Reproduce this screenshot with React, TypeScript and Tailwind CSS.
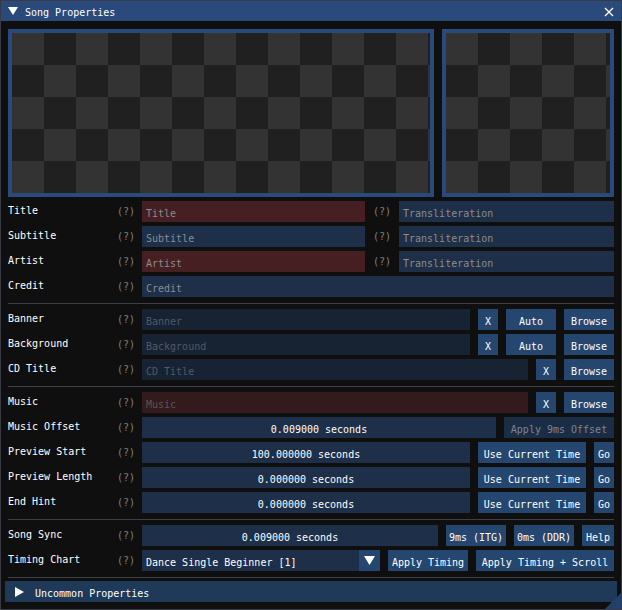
import React from "react";

const BTN = "#25466f";
const FIELD = "#1d2f49";
const RED = "#451f21";

function Field({
  text,
  bg = FIELD,
  color = "text-white",
  center = false,
  w,
}: {
  text: string;
  bg?: string;
  color?: string;
  center?: boolean;
  w?: string;
}) {
  return (
    <div
      className={`h-[21px] px-[4px] pt-[6px] flex items-start whitespace-nowrap overflow-hidden ${color} ${center ? "justify-center" : ""} ${w ?? "flex-1"}`}
      style={{ backgroundColor: bg }}
    >
      {text}
    </div>
  );
}

function Btn({ text, w, dim = false }: { text: string; w: string; dim?: boolean }) {
  return (
    <div
      className={`h-[21px] pt-[6px] flex items-start justify-center whitespace-nowrap ${w} ${dim ? "bg-[#1b2d45] text-[#7b8594]" : "text-white"}`}
      style={dim ? undefined : { backgroundColor: BTN }}
    >
      {text}
    </div>
  );
}

function Row({ label, children }: { label: string; children: React.ReactNode }) {
  return (
    <div className="flex h-[21px]">
      <div className="w-[109px] pt-[3px] text-white whitespace-nowrap">{label}</div>
      <div className="w-[25px] pt-[4px] text-[#808080]">(?)</div>
      <div className="flex-1 flex gap-[8px]">{children}</div>
    </div>
  );
}

function Sep() {
  return <div className="h-px bg-[#3e3e47] mt-[2px] mb-[1px]" />;
}

function Checker({ w }: { w: string }) {
  return (
    <div className={`${w} h-[168px] border-[4px] border-[#294a7a]`}>
      <div className="w-full h-full bg-[repeating-conic-gradient(#202020_0_25%,#333333_0_50%)] bg-[length:64px_64px]" />
    </div>
  );
}

export default function App() {
  return (
    <div className="relative w-[622px] h-[610px] bg-[#0f0f0f] border border-[#3a3a44] font-['DejaVu_Sans_Mono',monospace] text-[10px] leading-[13px] overflow-hidden">
      {/* title bar */}
      <div className="h-[20px] bg-[#294a7a] flex items-center text-white">
        <svg width="10" height="9" viewBox="0 0 10 9" className="ml-[7px] mt-[1px]">
          <polygon points="0,0 10,0 5,8" fill="#fff" />
        </svg>
        <span className="ml-[7px] mt-[2px]">Song Properties</span>
        <svg width="10" height="10" viewBox="0 0 10 10" className="ml-auto mr-[7px] mt-[1px]">
          <path d="M1 1 L9 9 M9 1 L1 9" stroke="#fff" strokeWidth="1.3" />
        </svg>
      </div>

      <div className="px-[7px] pt-[8px] flex flex-col gap-[4px]">
        <div className="flex gap-[8px]">
          <Checker w="w-[426px]" />
          <Checker w="flex-1" />
        </div>

        <Row label="Title">
          <Field text="Title" bg={RED} color="text-[#8c8c8c]" w="w-[223px]" />
          <div className="w-[18px] pt-[4px] text-[#808080]">(?)</div>
          <Field text="Transliteration" color="text-[#8c8c8c]" />
        </Row>
        <Row label="Subtitle">
          <Field text="Subtitle" color="text-[#8c8c8c]" w="w-[223px]" />
          <div className="w-[18px] pt-[4px] text-[#808080]">(?)</div>
          <Field text="Transliteration" color="text-[#8c8c8c]" />
        </Row>
        <Row label="Artist">
          <Field text="Artist" bg={RED} color="text-[#8c8c8c]" w="w-[223px]" />
          <div className="w-[18px] pt-[4px] text-[#808080]">(?)</div>
          <Field text="Transliteration" color="text-[#8c8c8c]" />
        </Row>
        <Row label="Credit">
          <Field text="Credit" color="text-[#8c8c8c]" />
        </Row>

        <Sep />

        <Row label="Banner">
          <Field text="Banner" bg="#172232" color="text-[#505a68]" />
          <Btn text="X" w="w-[20px]" />
          <Btn text="Auto" w="w-[50px]" />
          <Btn text="Browse" w="w-[50px]" />
        </Row>
        <Row label="Background">
          <Field text="Background" bg="#172232" color="text-[#505a68]" />
          <Btn text="X" w="w-[20px]" />
          <Btn text="Auto" w="w-[50px]" />
          <Btn text="Browse" w="w-[50px]" />
        </Row>
        <Row label="CD Title">
          <Field text="CD Title" bg="#172232" color="text-[#505a68]" />
          <Btn text="X" w="w-[20px]" />
          <Btn text="Browse" w="w-[50px]" />
        </Row>

        <Sep />

        <Row label="Music">
          <Field text="Music" bg="#331a1c" color="text-[#5e5354]" />
          <Btn text="X" w="w-[20px]" />
          <Btn text="Browse" w="w-[50px]" />
        </Row>
        <Row label="Music Offset">
          <Field text="0.009000 seconds" center />
          <Btn text="Apply 9ms Offset" w="w-[110px]" dim />
        </Row>
        <Row label="Preview Start">
          <Field text="100.000000 seconds" center />
          <Btn text="Use Current Time" w="w-[108px]" />
          <Btn text="Go" w="w-[20px]" />
        </Row>
        <Row label="Preview Length">
          <Field text="0.000000 seconds" center />
          <Btn text="Use Current Time" w="w-[108px]" />
          <Btn text="Go" w="w-[20px]" />
        </Row>
        <Row label="End Hint">
          <Field text="0.000000 seconds" center />
          <Btn text="Use Current Time" w="w-[108px]" />
          <Btn text="Go" w="w-[20px]" />
        </Row>

        <Sep />

        <Row label="Song Sync">
          <Field text="0.009000 seconds" center />
          <Btn text="9ms (ITG)" w="w-[60px]" />
          <Btn text="0ms (DDR)" w="w-[60px]" />
          <Btn text="Help" w="w-[32px]" />
        </Row>
        <Row label="Timing Chart">
          <div className="flex-1 flex h-[21px]" style={{ backgroundColor: FIELD }}>
            <div className="flex-1 px-[4px] pt-[6px] text-white whitespace-nowrap">
              Dance Single Beginner [1]
            </div>
            <div className="w-[21px] flex items-center justify-center" style={{ backgroundColor: BTN }}>
              <svg width="11" height="9" viewBox="0 0 11 9">
                <polygon points="0,0 11,0 5.5,9" fill="#fff" />
              </svg>
            </div>
          </div>
          <Btn text="Apply Timing" w="w-[80px]" />
          <Btn text="Apply Timing + Scroll" w="w-[138px]" />
        </Row>

        <div className="h-px bg-[#3e3e47] mt-[2px] mb-[-1px]" />

        <div className="-mx-[3px] h-[21px] bg-[#1f3958] flex items-center text-white">
          <svg width="9" height="10" viewBox="0 0 9 10" className="ml-[10px]">
            <polygon points="0,0 9,5 0,10" fill="#fff" />
          </svg>
          <span className="ml-[11px] mt-[4px]">Uncommon Properties</span>
        </div>
      </div>

      <svg width="16" height="16" viewBox="0 0 16 16" className="absolute right-0 bottom-0">
        <polygon points="16,0 16,16 0,16" fill="#24406a" />
      </svg>
    </div>
  );
}
